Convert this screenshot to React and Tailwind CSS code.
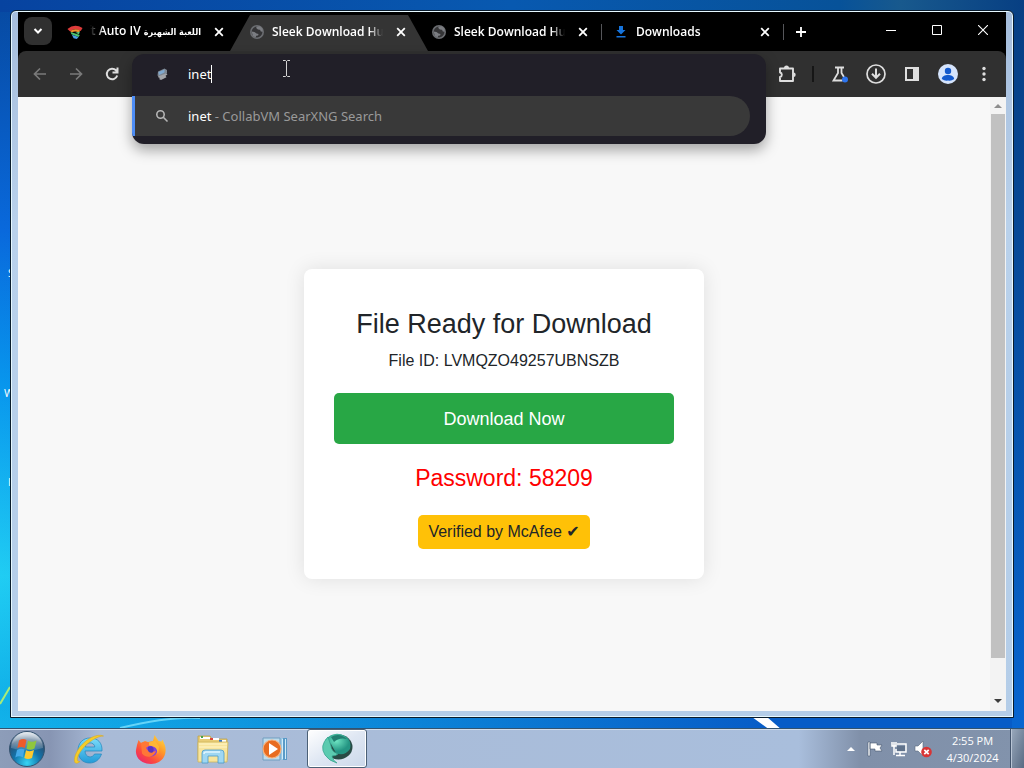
import React from "react";

const uiFont = "font-['Open_Sans','Noto_Sans','DejaVu_Sans',sans-serif]";

function CloseIcon() {
  return (
    <svg viewBox="0 0 16 16" className="size-4" fill="none" stroke="currentColor" strokeWidth="1.8" aria-hidden="true">
      <path d="M4.2 4.2l7.6 7.6M11.8 4.2l-7.6 7.6" />
    </svg>
  );
}

function GlobeIcon() {
  return (
    <svg viewBox="0 0 16 16" className="size-4" aria-hidden="true">
      <circle cx="8" cy="8" r="6.2" fill="#343436" stroke="#6a6c70" strokeWidth="1.6" />
      <path d="M7.500 2.500q-.6 1.500.5 2.200 1 1.300 3 1l.8 1.800 2 .3-.3-3-2.500-2.600zM2.500 7.500l3 .5 2 1.500 2 .4-.4 1.600-1.800.3-.8 1.700L4 12z" fill="#7b7d82" />
    </svg>
  );
}

function StackIcon() {
  return (
    <svg viewBox="0 0 18 18" className="size-[18px]" fill="none" aria-hidden="true">
      <path d="M.5 5.500Q8.500-1 17.500 4.500L15.500 8Q9 3.500 3.500 8.500z" fill="#dd3b3a" />
      <path d="M3.500 8Q9 4 15 7.500L13 9.500Q9 7.300 5.500 9.500z" fill="#f0912f" />
      <path d="M4 9l10.500 3.500-1.500 2L5 11.500z" fill="#4ec36c" />
      <path d="M5.500 12.200l7.500 2.300-2 2.500-3.500-1z" fill="#4b9fe5" />
      <path d="M9.500 9.800l5-1.300-1 3z" fill="#55c878" />
    </svg>
  );
}

function DownloadFavicon() {
  return (
    <svg viewBox="0 0 16 16" className="size-4" fill="#1674dd" aria-hidden="true">
      <path d="M6 2h4v4h2.500L8 10.500 3.500 6H6zM3.500 12h9v1.500h-9z" />
    </svg>
  );
}

function Tab({ icon, title, rtl, active, separator }) {
  return (
    <div className="relative flex h-full w-[182px] min-w-0 items-center pr-[11px] pl-[11px]">
      {active && (
        <div className="absolute top-[3px] -right-2 bottom-0 -left-2 bg-[#343434] [clip-path:polygon(0_100%,20px_0,178px_0,100%_100%)]" />
      )}
      <button type="button" className="relative flex min-w-0 flex-1 items-center gap-[7px] text-left" aria-current={active ? "page" : undefined}>
        <span className="flex w-4 shrink-0 justify-center">{icon}</span>
        <span
          dir={rtl ? "rtl" : "ltr"}
          className={
            "block w-[111px] overflow-hidden text-[12px] leading-5 font-semibold whitespace-nowrap text-white " +
            (rtl
              ? "[mask-image:linear-gradient(to_right,transparent,black_14px)]"
              : "[mask-image:linear-gradient(to_left,transparent,black_14px)]")
          }
        >
          {title}
        </span>
      </button>
      <button type="button" aria-label="Close tab" className="relative text-white">
        <CloseIcon />
      </button>
      {separator && <span className="absolute top-3 right-0 h-4 w-px bg-[#55565a]" />}
    </div>
  );
}

function TabStrip() {
  return (
    <header className="flex h-[39px] bg-black text-white">
      <button type="button" aria-label="Search tabs" className="mt-[5px] ml-[6px] flex size-7 shrink-0 items-center justify-center rounded-lg bg-[#303030]">
        <svg viewBox="0 0 16 16" className="size-4" fill="none" stroke="white" strokeWidth="2">
          <path d="M4.500 6l3.500 3.500L11.500 6" />
        </svg>
      </button>
      <nav className="ml-1 flex" aria-label="Tabs">
        <Tab
          rtl
          icon={<StackIcon />}
          title={
            <>
              <span className="font-['DejaVu_Sans_Condensed','DejaVu_Sans',sans-serif] text-[9px]">اللعبة الشهيرة</span> Grand Theft Auto IV
            </>
          }
        />
        <Tab active icon={<GlobeIcon />} title="Sleek Download Hub" />
        <Tab separator icon={<GlobeIcon />} title="Sleek Download Hub" />
        <Tab separator icon={<DownloadFavicon />} title="Downloads" />
      </nav>
      <button type="button" aria-label="New tab" className="flex w-[34px] items-center justify-center">
        <svg viewBox="0 0 12 12" className="size-3" stroke="white" strokeWidth="1.8">
          <path d="M6 1v10M1 6h10" />
        </svg>
      </button>
      <div className="ml-auto flex h-9">
        <button type="button" aria-label="Minimize" className="flex w-[46px] items-center justify-center">
          <svg viewBox="0 0 10 10" className="size-[10px]" stroke="white"><path d="M0 5.500h10" /></svg>
        </button>
        <button type="button" aria-label="Maximize" className="flex w-[46px] items-center justify-center">
          <svg viewBox="0 0 10 10" className="size-[10px]" fill="none" stroke="white"><path d="M.5.5h9v9h-9z" /></svg>
        </button>
        <button type="button" aria-label="Close" className="flex w-[46px] items-center justify-center">
          <svg viewBox="0 0 10 10" className="size-[10px]" stroke="white" strokeWidth="1.1"><path d="M0 0l10 10M10 0L0 10" /></svg>
        </button>
      </div>
    </header>
  );
}

function ToolButton({ label, children, dim }) {
  return (
    <button type="button" aria-label={label} className={"flex h-9 w-9 shrink-0 items-center justify-center " + (dim ? "text-[#7a7a7a]" : "text-[#dedede]")}>
      {children}
    </button>
  );
}

function Omnibox() {
  return (
    <div className="relative z-10 mx-[2px] h-full min-w-0 flex-1 font-['Noto_Sans','Open_Sans',sans-serif]">
      <div className="absolute inset-x-0 top-[3px] overflow-hidden rounded-xl bg-[#211f28] pb-2 shadow-[0_6px_14px_rgba(0,0,0,0.35)]">
        <div className="mb-[2px] flex h-10 items-center pl-[22px]">
          <svg viewBox="0 0 16 16" className="size-4 shrink-0" aria-hidden="true">
            <path d="M4 5.500l6.500-3L13 4v3.500L5 11 3.500 9.500z" fill="#7e8792" />
            <path d="M4.500 6l6-2.600v3L5 9z" fill="#7fa8cf" />
            <path d="M4 10.500l8-3 1.500 1-2 1.200 1 1.500-5.500 2.800-2-1 1-1-1.500-.5z" fill="#a3a5aa" />
          </svg>
          <label htmlFor="address" className="sr-only">Address and search bar</label>
          <input id="address" defaultValue="inet" autoComplete="off" className="ml-[18px] [field-sizing:content] max-w-full bg-transparent text-[13px] leading-5 text-white outline-none" />
          <span className="h-[18px] w-px bg-white" />
        </div>
        <button type="button" className="flex w-full pr-4 text-left">
          <span className="flex h-10 w-full items-center rounded-r-full border-l-[3px] border-[#4d8df6] bg-[#393939] pl-[19px]">
            <svg viewBox="0 0 16 16" className="size-4 shrink-0" fill="none" stroke="#b4b4b4" strokeWidth="1.600">
              <circle cx="6.500" cy="6.500" r="3.700" />
              <path d="M9.300 9.300l4.200 4.200" />
            </svg>
            <span className="ml-[18px] text-[13px] leading-5 whitespace-pre text-white">inet<span className="text-[#9a9a9a]"> - CollabVM SearXNG Search</span></span>
          </span>
        </button>
      </div>
      <svg viewBox="0 0 9 17" className="absolute top-[9px] left-[150px] h-[17px] w-[9px]" fill="none" stroke="#d4d4d4" aria-hidden="true">
        <path d="M1 .5h2.500l1 1 1-1H8M4.500 1v15M1 16.500h2.500l1-1 1 1H8" />
      </svg>
    </div>
  );
}

function Toolbar() {
  return (
    <div className="flex h-[46px] items-center rounded-t-lg bg-[#303030] px-1">
      <ToolButton label="Back" dim>
        <svg viewBox="0 0 16 16" className="size-4" fill="none" stroke="currentColor" strokeWidth="1.700"><path d="M14 8H3M8 2.500L2.500 8 8 13.500" /></svg>
      </ToolButton>
      <ToolButton label="Forward" dim>
        <svg viewBox="0 0 16 16" className="size-4" fill="none" stroke="currentColor" strokeWidth="1.700"><path d="M2 8h11M8 2.500L13.500 8 8 13.500" /></svg>
      </ToolButton>
      <ToolButton label="Reload">
        <svg viewBox="0 0 16 16" className="size-4" fill="none" stroke="currentColor" strokeWidth="2"><path d="M13.200 9.500A5.300 5.300 0 1 1 12 4.300L13 5.500M13.500 1.500v5h-5" /></svg>
      </ToolButton>
      <Omnibox />
      <ToolButton label="Extensions">
        <svg viewBox="0 0 20 20" className="size-5" fill="none" stroke="currentColor" strokeWidth="1.900">
          <path d="M4 4.500h13V17H4v-4a2.300 2.300 0 0 0 0-4.500z" strokeLinejoin="round" />
          <path d="M8 4a2.500 2.500 0 0 1 5 0zM17.500 8.500a2.200 2.200 0 0 1 0 4.400z" fill="currentColor" stroke="none" />
        </svg>
      </ToolButton>
      <span className="mx-2 h-4 w-[2px] bg-[#161616]" />
      <ToolButton label="Experiments">
        <svg viewBox="0 0 20 20" className="size-5" fill="none" stroke="currentColor" strokeWidth="1.800">
          <path d="M5 3.500h9M8 3.500V9l-4.500 7.500h9M11.500 3.500V9l2.500 4" />
          <circle cx="15" cy="15.500" r="3" fill="#2d75f0" stroke="none" />
        </svg>
      </ToolButton>
      <ToolButton label="Downloads">
        <svg viewBox="0 0 20 20" className="size-5" fill="none" stroke="currentColor" strokeWidth="1.700">
          <circle cx="10" cy="10" r="9" />
          <path d="M10 4.500v9M6 9.800l4 4 4-4" strokeWidth="2" />
        </svg>
      </ToolButton>
      <ToolButton label="Side panel">
        <svg viewBox="0 0 16 16" className="size-4"><path d="M1 1h14v14H1zM3 3v10h6V3z" fillRule="evenodd" fill="currentColor" /></svg>
      </ToolButton>
      <ToolButton label="Profile">
        <svg viewBox="0 0 20 20" className="size-5">
          <circle cx="10" cy="10" r="10" fill="#d5e4fc" />
          <circle cx="10" cy="7" r="3.200" fill="#1259cd" />
          <path d="M3.800 15c.4-3 3-4 6.200-4s5.800 1 6.200 4A8 8 0 0 1 10 16.500 8 8 0 0 1 3.800 15z" fill="#1259cd" />
        </svg>
      </ToolButton>
      <ToolButton label="Menu">
        <svg viewBox="0 0 16 16" className="size-4" fill="currentColor"><circle cx="8" cy="2.500" r="1.700" /><circle cx="8" cy="8" r="1.700" /><circle cx="8" cy="13.500" r="1.700" /></svg>
      </ToolButton>
    </div>
  );
}

function DownloadPage() {
  return (
    <div className="flex min-h-0 flex-1 bg-[#f8f8f8]">
      <main className="flex flex-1 items-center justify-center pt-10 font-['Liberation_Sans',Arial,sans-serif] text-[#212529]">
        <section className="flex w-[400px] flex-col items-center rounded-lg bg-white px-[30px] pt-[38px] pb-[30px] shadow-[0_0_20px_rgba(0,0,0,0.1)]">
          <h1 className="text-[27px] leading-[34px]">File Ready for Download</h1>
          <p className="mt-2 text-base leading-6">File ID: LVMQZO49257UBNSZB</p>
          <button type="button" className="mt-5 h-[51px] w-full rounded-[5px] bg-[#28a745] text-lg text-white">Download Now</button>
          <p className="mt-4 text-[23px] leading-9 text-[#f00]">Password: 58209</p>
          <p className="mt-[19px] rounded-[5px] bg-[#ffc107] px-[10px] py-[5px] text-base leading-6">Verified by McAfee <span className="font-['DejaVu_Sans',sans-serif]">✔</span></p>
        </section>
      </main>
      <div className="flex w-4 flex-col items-center bg-[#f3f3f3]" aria-hidden="true">
        <svg viewBox="0 0 16 17" className="h-[17px] w-4 shrink-0" fill="#8d8d8d"><path d="M4 11l4-4 4 4z" /></svg>
        <div className="flex w-full min-h-0 flex-1 flex-col px-px">
          <div className="flex-[543] bg-[#c1c1c1]" />
          <div className="flex-[36]" />
        </div>
        <svg viewBox="0 0 16 17" className="h-[17px] w-4 shrink-0" fill="#3c3c3c"><path d="M4 5l4 4 4-4z" /></svg>
      </div>
    </div>
  );
}

function TaskButton({ label, active, children }) {
  return (
    <button
      type="button"
      aria-label={label}
      className={
        "flex h-[39px] w-[60px] items-center justify-center rounded-[3px] " +
        (active ? "border border-[#4b6076] bg-linear-to-br from-white via-[#dfe7f3] to-[#cbd8ea] shadow-[inset_0_0_0_1px_white]" : "")
      }
    >
      {children}
    </button>
  );
}

function StartOrb() {
  return (
    <svg viewBox="0 0 38 38" className="size-[38px]" aria-hidden="true">
      <defs>
        <radialGradient id="orb" cx=".5" cy=".9" r=".85">
          <stop offset="0" stopColor="#37d5f4" />
          <stop offset=".45" stopColor="#1274ab" />
          <stop offset=".8" stopColor="#294f73" />
          <stop offset="1" stopColor="#91a7bd" />
        </radialGradient>
        <linearGradient id="orbShine" x2="0" y2="1">
          <stop stopColor="#fff" stopOpacity=".75" />
          <stop offset="1" stopColor="#fff" stopOpacity=".1" />
        </linearGradient>
      </defs>
      <circle cx="19" cy="19" r="17.500" fill="url(#orb)" stroke="#35536f" />
      <path d="M3 18a16 16 0 0 1 32 0Q19 23 3 18z" fill="url(#orbShine)" />
      <path d="M11 10.500q4-2.500 7.500-.5l-1.700 8q-4-2-7.500.3z" fill="#ee5b2b" />
      <path d="M20 10.800q4 2 8.500-.3l-2 8q-4 2.300-8 .2z" fill="#8fc63e" />
      <path d="M9 20q4-2.300 7.500-.4l-1.700 7.600q-4-2-7.500.3z" fill="#44a9e8" />
      <path d="M18 20.300q4 2 8-.2l-2 7.800q-4 2-7.700.1z" fill="#fdc92e" />
    </svg>
  );
}

function Taskbar() {
  return (
    <footer className="relative z-10 flex h-10 shrink-0 items-center border-t border-[#33536f] bg-[linear-gradient(to_right,#8d9db9_0,#8795b3_50px,#a9bbd7_100px,#a9bedc_78%,#8090a9_84%,#8293ac_100%)] shadow-[inset_0_1px_0_#d1ddec]">
      <button type="button" aria-label="Start" className="ml-2 flex w-[51px] items-center">
        <StartOrb />
      </button>
      <div className="flex gap-[2px]">
        <TaskButton label="Internet Explorer">
          <svg viewBox="0 0 32 32" className="size-8">
            <defs><linearGradient id="ie" x2="0" y2="1"><stop stopColor="#7bdcfa" /><stop offset="1" stopColor="#239bd8" /></linearGradient></defs>
            <path d="M29 18H12c.2 7 7.500 7.500 9.500 3h7c-2 6-6.500 9-12 9C9.500 30 5 25 5 17.500S10 5 17 5c8 0 12.500 5 12 13zM12.200 14h9.600c-.5-5.500-9-5.500-9.600 0z" fill="url(#ie)" stroke="#2385bb" strokeWidth=".7" />
            <path d="M30.500 3C24 0 13 6 6.500 14.500 1 22 .5 28.500 2.500 30c1.500.7 3-.3 4.500-1.500C2.500 29 4 23 9 16.500 15.500 8.500 24.500 3 30.500 3z" fill="#f6cc28" stroke="#d9a51b" strokeWidth=".5" />
          </svg>
        </TaskButton>
        <TaskButton label="Firefox">
          <svg viewBox="0 0 32 32" className="size-8">
            <defs><linearGradient id="fox" x1="1" x2=".2" y2="1"><stop stopColor="#ffe64b" /><stop offset=".4" stopColor="#ff9b28" /><stop offset=".75" stopColor="#fc483f" /><stop offset="1" stopColor="#e92670" /></linearGradient></defs>
            <path d="M2 12l1.500-5 2.500 3 4-2 3 1 5-1 1.500-6 4 6 3 .5 1-2 2.500 6C33 24 25 31 16 31S0 25 1 17z" fill="url(#fox)" />
            <circle cx="16" cy="17" r="6.500" fill="#8141dc" />
            <path d="M6 10c5-2 9-1 10 2.500-3 0-3 2-5 2 1 4 6 6 10 3-1 6-9 9-14 3z" fill="#ff7737" />
            <path d="M14 9.500l6-2 4 6-1 8c-1-5-1-8-9-9z" fill="#ffb636" />
            <path d="M13 14c4-2 7 1 5 5-2 2-5 0-5-2z" fill="#5936bc" />
          </svg>
        </TaskButton>
        <TaskButton label="Windows Explorer">
          <svg viewBox="0 0 34 32" className="h-8 w-[34px]">
            <path d="M2 3h12l2 3h15v21H2z" fill="#e9cd75" stroke="#bba24b" strokeWidth=".8" />
            <path d="M4 5h10M15 6h8M24 8h6" stroke="#fff" strokeWidth="2" />
            <path d="M5 3h2v2H5z" fill="#45a34b" /><path d="M14 5h3v2h-3z" fill="#db493a" /><path d="M23 7h3v2h-3z" fill="#3977c8" />
            <path d="M2 9h30l-1 20H2z" fill="#f8e59c" stroke="#cdb55e" strokeWidth=".8" />
            <path d="M3 11h28M3 14h28" stroke="#fff6c9" />
            <path d="M6 30V20q0-3 3-3h16q3 0 3 3v10h-6v-7H12v7z" fill="#9fd7f2" stroke="#4a9bc9" strokeWidth=".8" />
            <path d="M8 21q0-2 2-2h14" fill="none" stroke="#e1f6ff" strokeWidth="1.500" />
          </svg>
        </TaskButton>
        <TaskButton label="Media Player">
          <svg viewBox="0 0 28 28" className="size-7">
            <path d="M8 3h18v22H8z" fill="#5a9ac7" /><path d="M5 3h17v22H5z" fill="#98c8e5" /><path d="M2 3h17v22H2z" fill="#bedcec" stroke="#709ec0" />
            <path d="M21.500 4v20M24.500 4v20" stroke="#d0ecfa" />
            <circle cx="11" cy="14" r="9" fill="#e86c20" stroke="#f7b07b" strokeWidth="1.200" />
            <path d="M8 8l9 6-9 6z" fill="white" />
          </svg>
        </TaskButton>
        <TaskButton label="Browser" active>
          <svg viewBox="0 0 34 34" className="size-[34px]">
            <defs><radialGradient id="swirl" cx=".45" cy=".35"><stop stopColor="#6ee4c2" /><stop offset="1" stopColor="#249583" /></radialGradient></defs>
            <ellipse cx="18.500" cy="15" rx="14" ry="12.500" fill="#294b45" />
            <path d="M5 8q9-10 20-4 7 4 5 13-6 8-14 4l-5-9z" fill="url(#swirl)" />
            <path d="M11 5q8-5 16 2-8-2-13 3z" fill="#217e70" />
            <path d="M8 5q-9 9-3 18 4 6 12 8-4-2-5-7 4 0 6-2-7-3-7-8z" fill="#5ccbb0" stroke="#31a18b" strokeWidth=".7" />
          </svg>
        </TaskButton>
      </div>
      <div className="ml-auto flex h-full items-center text-white">
        <button type="button" aria-label="Show hidden icons" className="flex w-6 justify-center">
          <svg viewBox="0 0 8 5" className="h-[5px] w-2" fill="white"><path d="M0 5l4-4 4 4z" /></svg>
        </button>
        <button type="button" aria-label="Action Center" className="flex w-6 justify-center">
          <svg viewBox="0 0 16 16" className="size-4" fill="white" stroke="#46586e" strokeWidth=".6"><path d="M1 1h2v14H1zM3 2h7v2h5l-2 3 2 3H8V8H3z" /></svg>
        </button>
        <button type="button" aria-label="Network" className="flex w-6 justify-center">
          <svg viewBox="0 0 16 16" className="size-4" fill="none" stroke="white" strokeWidth="1.500"><path d="M6 3h9v8H5V8M9 11v3M5 14.500h9M1 1v4h4V1M3 1v8M3 9v5" /><path d="M6 5h8v5H6z" fill="#60728b" stroke="none" /></svg>
        </button>
        <button type="button" aria-label="Volume muted" className="flex w-6 justify-center">
          <svg viewBox="0 0 18 18" className="size-[18px]"><path d="M1 6h3l5-5v15l-5-5H1z" fill="white" stroke="#59697d" strokeWidth=".6" /><circle cx="12.500" cy="12" r="5.300" fill="#d83435" /><path d="M10.300 9.800l4.400 4.400M14.700 9.800l-4.400 4.400" stroke="white" strokeWidth="1.700" /></svg>
        </button>
        <div className="w-[75px] text-center text-[11px] leading-[17px]">
          <div>2:55 PM</div>
          <div>4/30/2024</div>
        </div>
        <button type="button" aria-label="Show desktop" className="h-full w-[14px] border-l border-[#42546c] bg-linear-to-br from-[#9aaabd] to-[#596b83] shadow-[inset_1px_0_0_#b8c5d5]" />
      </div>
    </footer>
  );
}

export default function App() {
  return (
    <div className={"relative flex h-screen flex-col overflow-hidden bg-[linear-gradient(to_right,transparent_0,#075cc7_75%),linear-gradient(to_bottom,#0749a0_0,#0969dc_30%,#0896ed_50%,#20cdf3_75%,#10afe8_92%,#18baf0_100%)] " + uiFont}>
      <div className="absolute inset-y-0 right-0 w-3 bg-[linear-gradient(to_bottom,#073f83,#074997_30%,#0868d5_100%)]" />
      <div className="absolute inset-x-0 top-0 h-3 bg-[linear-gradient(to_right,#0743a0,#0859b0_50%,#075299_82%,#18598d_88%,#073f83)]" />
      <svg viewBox="0 0 1024 60" preserveAspectRatio="none" className="absolute inset-x-0 bottom-7 h-[60px] w-full" aria-hidden="true">
        <path d="M0 24L10 7" stroke="#a8ec79" strokeWidth="2" />
        <path d="M120 48Q170 36 200 38" stroke="#65d4f8" strokeWidth="2" fill="none" />
        <path d="M752 37l15 0 15 13h-12z" fill="white" />
      </svg>
      <div className="absolute top-0 left-2 text-[11px] leading-4 text-white" aria-hidden="true">
        <span className="absolute top-[265px] left-0">S</span>
        <span className="absolute top-[385px] -left-1">W</span>
        <span className="absolute top-[474px] left-0">I</span>
      </div>
      <div className="relative flex min-h-0 flex-1 flex-col p-[10px]">
        <div className="flex min-h-0 flex-1 flex-col rounded-t-md border border-[#0a1c2c] bg-[linear-gradient(to_bottom,#a5bddc,#b9d1eb_30%,#b4cde8)] px-[7px] pt-px pb-[6px] shadow-[inset_0_0_0_1px_#e6f8ff]">
          <div className="flex min-h-0 flex-1 flex-col bg-black">
            <TabStrip />
            <Toolbar />
            <DownloadPage />
          </div>
        </div>
      </div>
      <Taskbar />
    </div>
  );
}
